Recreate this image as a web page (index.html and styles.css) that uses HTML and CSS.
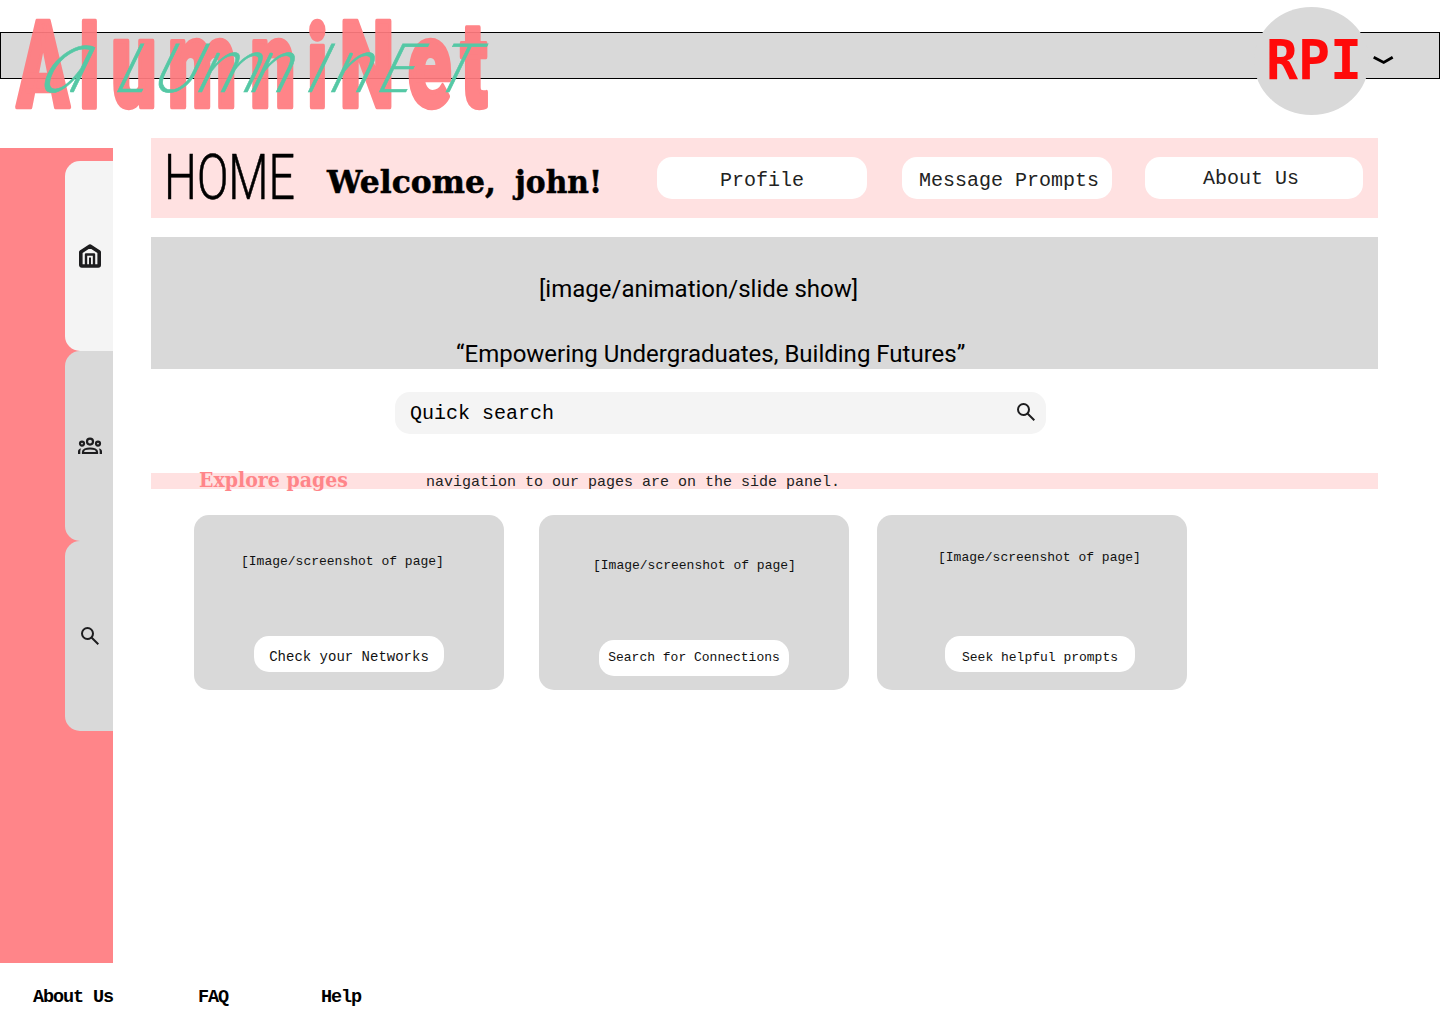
FILE: index.html
```html
<!DOCTYPE html>
<html lang="en">
<head>
<meta charset="utf-8">
<title>AlumniNet</title>
<link rel="stylesheet" href="styles.css">
</head>
<body>
<header class="header">
  <div class="topbar">
    <svg class="chevron" width="22" height="10" viewBox="0 0 22 10"><path d="M.7 1.300 10.700 6.500 19.700 1.300" fill="none" stroke="#000" stroke-width="2.800"/></svg>
  </div>
  <svg class="logo" width="520" height="125" viewBox="0 0 520 125">
    <g opacity=".93"><text class="logo-block" transform="scale(.64 1)" y="107" x="26 124 174 262 391 480 531 637 720">A<tspan class="tall">l</tspan><tspan class="low">umn</tspan><tspan class="tall">i</tspan>N<tspan class="low">e</tspan>t</text></g>
    <text class="logo-script" transform="translate(0 92) skewX(-20)" y="0" x="38 113 149 195 248 304 328 375 432"><tspan class="script-a">a</tspan>LU<tspan class="script-low">mn</tspan>I<tspan class="script-low">n</tspan>ET</text>
  </svg>
  <div class="badge">
    <svg width="112" height="108" viewBox="0 0 112 108"><text class="badge-text" x="12" y="72" textLength="96" lengthAdjust="spacingAndGlyphs">RPI</text></svg>
  </div>
</header>

<div class="layout">
  <nav class="rail">
    <a class="tab tab-active"><svg width="24" height="26" viewBox="0 0 24 26"><path d="M2.800 9 12 3l9.200 6V22a1 1 0 0 1-1 1H3.800a1 1 0 0 1-1-1Z" fill="none" stroke="#1d1d1f" stroke-width="3.600" stroke-linejoin="round"/><path d="M8 22.500V11.500h8V22.500" fill="none" stroke="#1d1d1f" stroke-width="2.400" stroke-linejoin="round"/><path d="M12 22.500V14.500" stroke="#1d1d1f" stroke-width="2"/></svg></a>
    <a class="tab"><svg width="24" height="24" viewBox="0 0 24 24"><g fill="none" stroke="#1d1d1f" stroke-width="2.200"><circle cx="12" cy="7.600" r="3"/><circle cx="4" cy="9.600" r="2"/><circle cx="20" cy="9.600" r="2"/><path d="M5 19v-1c0-2 3-3.500 7-3.500s7 1.500 7 3.500v1Z"/></g><path fill="#1d1d1f" d="M0 20v-2.500c0-1.600 1.200-2.700 3.200-2.900-.6.800-.9 1.700-.9 2.900V20Zm24 0v-2.500c0-1.600-1.200-2.700-3.200-2.900.6.800.9 1.700.9 2.900V20Z"/></svg></a>
    <a class="tab"><svg width="24" height="24" viewBox="0 0 24 24"><path fill="#1d1d1f" d="m19.600 21-6.300-6.300A6.100 6.100 0 0 1 9.500 16 6.500 6.500 0 1 1 16 9.500a6.100 6.100 0 0 1-1.300 3.800l6.300 6.300ZM9.500 14a4.500 4.500 0 1 0 0-9 4.500 4.500 0 0 0 0 9Z"/></svg></a>
  </nav>

  <main class="main">
    <section class="hero">
      <svg width="470" height="80" viewBox="0 0 470 80">
        <text class="home" x="13" y="61" textLength="131" lengthAdjust="spacingAndGlyphs">HOME</text>
        <text class="welcome" x="176" y="55" textLength="169" lengthAdjust="spacingAndGlyphs">Welcome,</text>
        <text class="welcome" x="364" y="55" textLength="87" lengthAdjust="spacingAndGlyphs">john!</text>
      </svg>
      <a class="pill pill-profile">Profile</a>
      <a class="pill pill-message">Message Prompts</a>
      <a class="pill pill-about">About Us</a>
    </section>

    <section class="slideshow">
      <p class="slide-label">[image/animation/slide show]</p>
      <p class="slide-quote">“Empowering Undergraduates, Building Futures”</p>
    </section>

    <div class="search">
      <span>Quick search</span>
      <svg width="24" height="24" viewBox="0 0 24 24"><path fill="#1d1d1f" d="m19.600 21-6.300-6.300A6.100 6.100 0 0 1 9.500 16 6.500 6.500 0 1 1 16 9.500a6.100 6.100 0 0 1-1.300 3.800l6.300 6.300ZM9.500 14a4.500 4.500 0 1 0 0-9 4.500 4.500 0 0 0 0 9Z"/></svg>
    </div>

    <div class="explore">
      <svg class="explore-title" width="160" height="16" viewBox="0 0 160 16"><text class="explore-text" x="0" y="14" textLength="149" lengthAdjust="spacingAndGlyphs">Explore pages</text></svg>
      <span class="explore-note">navigation to our pages are on the side panel.</span>
    </div>

    <section class="cards">
      <article class="card card-networks">
        <p class="card-image">[Image/screenshot of page]</p>
        <a class="card-button">Check your Networks</a>
      </article>
      <article class="card card-connections">
        <p class="card-image">[Image/screenshot of page]</p>
        <a class="card-button">Search for Connections</a>
      </article>
      <article class="card card-prompts">
        <p class="card-image">[Image/screenshot of page]</p>
        <a class="card-button">Seek helpful prompts</a>
      </article>
    </section>
  </main>
</div>

<footer class="footer">
  <a>About Us</a>
  <a>FAQ</a>
  <a>Help</a>
</footer>
</body>
</html>
```
FILE: styles.css
```css
* { box-sizing: border-box; }
body {
  margin: 0;
  width: 1440px;
  height: 1024px;
  overflow: hidden;
  background: #fff;
  color: #000;
  font-family: "Liberation Mono", monospace;
}
p { margin: 0; }
svg { display: block; flex: none; overflow: visible; }

.header { position: relative; height: 138px; padding-top: 32px; }
.topbar {
  display: flex;
  justify-content: flex-end;
  height: 47px;
  padding: 23px 44px 0 0;
  border: 1px solid #000;
  background: #d9d9d9;
}
.logo { position: absolute; left: 0; top: 0; }
.logo-block {
  font: 900 121px Roboto, sans-serif;
  fill: #ff7b7f;
  stroke: #ff7b7f;
  stroke-width: 4.500px;
  stroke-linejoin: round;
}
.tall { font-size: 115px; }
.low { font-size: 125px; }
.logo-script {
  font: italic 300 68px Lato, sans-serif;
  fill: #55c8a5;
  stroke: #55c8a5;
  stroke-width: .6px;
}
.script-a { font-size: 92px; }
.script-low { font-size: 78px; }
.badge {
  position: absolute;
  left: 1254px;
  top: 7px;
  width: 115px;
  height: 108px;
  border-radius: 50%;
  background: #d9d9d9;
}
.badge-text { font: bold 55px "DejaVu Sans Mono", monospace; fill: #ff0a0a; }

.layout { display: flex; height: 825px; }
.rail {
  width: 113px;
  height: 815px;
  margin-top: 10px;
  padding: 13px 0 0 65px;
  background: #ff8589;
}
.tab {
  display: flex;
  align-items: center;
  justify-content: center;
  height: 190px;
  padding-left: 2px;
  border-radius: 15px 0 0 15px;
  background: #d9d9d9;
}
.tab-active { background: #f4f4f4; }

.main { width: 1227px; margin-left: 38px; }
.hero { display: flex; height: 80px; background: #ffe1e1; }
.home { font: 300 63px Roboto, sans-serif; stroke: #000; stroke-width: .6px; }
.welcome { font: bold 32.500px "DejaVu Serif", serif; stroke: #000; stroke-width: .5px; }
.pill {
  width: 210px;
  height: 42px;
  margin-top: 19px;
  border-radius: 15px;
  background: #fff;
  color: #222;
  font-size: 20px;
  line-height: 47px;
  text-align: center;
}
.pill-profile { margin-left: 36px; }
.pill-message { margin-left: 35px; padding-left: 4px; white-space: nowrap; }
.pill-about { width: 218px; margin-left: 33px; padding-right: 6px; line-height: 43px; }

.slideshow {
  height: 132px;
  margin-top: 19px;
  padding-top: 38px;
  background: #d9d9d9;
  font: 24px/28px Roboto, sans-serif;
}
.slide-label { padding-left: 388px; }
.slide-quote { margin-top: 37px; padding-left: 305px; }

.search {
  display: flex;
  justify-content: space-between;
  width: 651px;
  height: 42px;
  margin: 23px 0 0 244px;
  padding: 8px 8px 0 15px;
  border-radius: 15px;
  background: #f4f4f4;
  font-size: 20px;
  line-height: 27px;
}

.explore { display: flex; height: 16px; margin-top: 39px; padding-left: 48px; background: #ffe1e1; }
.explore-text { font: bold 20px "DejaVu Serif", serif; fill: #ff8589; }
.explore-note { margin-left: 67px; color: #222; font-size: 15px; line-height: 20px; }

.cards { display: flex; margin: 26px 0 0 43px; }
.card {
  display: flex;
  flex-direction: column;
  align-items: flex-start;
  justify-content: space-between;
  width: 310px;
  height: 175px;
  border-radius: 15px;
  background: #d9d9d9;
  color: #111;
  font-size: 13px;
}
.card-image { line-height: 16px; }
.card-button {
  width: 190px;
  height: 36px;
  border-radius: 15px;
  background: #fff;
  line-height: 43px;
  text-align: center;
}
.card-networks { padding: 39px 0 18px 60px; }
.card-networks .card-image { margin-left: -13px; }
.card-networks .card-button { font-size: 14px; }
.card-connections { margin-left: 35px; padding: 43px 0 14px 60px; }
.card-connections .card-image { margin-left: -6px; }
.card-connections .card-button { line-height: 35px; }
.card-prompts { margin-left: 28px; padding: 35px 0 18px 68px; }
.card-prompts .card-image { margin-left: -7px; }

.footer {
  display: flex;
  padding: 23px 0 0 33px;
  font-size: 18.500px;
  font-weight: bold;
  line-height: 24px;
  letter-spacing: -1.100px;
}
.footer a + a { margin-left: 85px; }
.footer a + a + a { margin-left: 93px; }
```
